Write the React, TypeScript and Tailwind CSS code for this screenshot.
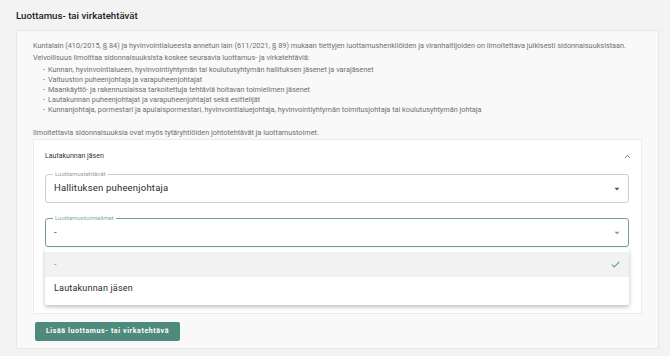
import React from 'react';

const bullets = [
  'Kunnan, hyvinvointialueen, hyvinvointiyhtymän tai koulutusyhtymän hallituksen jäsenet ja varajäsenet',
  'Valtuuston puheenjohtaja ja varapuheenjohtajat',
  'Maankäyttö- ja rakennuslaissa tarkoitettuja tehtäviä hoitavan toimielimen jäsenet',
  'Lautakunnan puheenjohtajat ja varapuheenjohtajat sekä esittelijät',
  'Kunnanjohtaja, pormestari ja apulaispormestari, hyvinvointialuejohtaja, hyvinvointiyhtymän toimitusjohtaja tai koulutusyhtymän johtaja',
];

const Caret: React.FC<{ color: string }> = ({ color }) => (
  <svg width="6" height="4" viewBox="0 0 6 4">
    <path d="M0.5 0.8 L5.5 0.8 L3 3.4 Z" fill={color} />
  </svg>
);

const App: React.FC = () => {
  return (
    <div className="w-[670px] h-[356px] bg-[#f3f3f3] overflow-hidden font-['Roboto',sans-serif]">
      <div className="h-[30px] flex items-center px-4 pt-[2px] text-[9.7px] font-medium text-[#222]">
        Luottamus- tai virkatehtävät
      </div>

      <div className="mx-4 w-[643px] h-[319px] bg-[#f9f9f9] border border-[#e7e7e7] px-[16px] pt-[9px]">
        <div className="text-[7.3px] leading-[11px] text-[#707070]">
          <p>
            Kuntalain (410/2015, § 84) ja hyvinvointialueesta annetun lain (611/2021, § 89) mukaan tiettyjen luottamushenkilöiden ja viranhaltijoiden on ilmoitettava julkisesti sidonnaisuuksistaan.
          </p>
          <p className="mt-[1px]">Velvollisuus ilmoittaa sidonnaisuuksista koskee seuraavia luottamus- ja virkatehtäviä:</p>
          <ul className="mt-[2px] pl-[10px]">
            {bullets.map((b) => (
              <li key={b} className="flex items-center h-[10px] leading-[10px]">
                <span className="w-[5px] text-[6px]">•</span>
                <span>{b}</span>
              </li>
            ))}
          </ul>
          <p className="mt-[12px]">Ilmoitettavia sidonnaisuuksia ovat myös tytäryhtiöiden johtotehtävät ja luottamustoimet.</p>
        </div>

        <div className="relative mt-[1px] w-[609px] h-[175px] bg-white border border-[#ececec] pl-[11px] pr-[12px]">
          <div className="h-[32px] flex items-center justify-between text-[7px] text-[#333]">
            <span>Lautakunnan jäsen</span>
            <svg width="7" height="5" viewBox="0 0 7 5" className="mr-[-2px]">
              <path d="M1 4 L3.5 1.3 L6 4" stroke="#777" strokeWidth="1" fill="none" />
            </svg>
          </div>

          <div className="relative mt-[2px] h-[29px] border border-[#cfcfcf] rounded-[3px] flex items-center justify-between pl-[8px] pr-[8px]">
            <span className="absolute top-[-5px] left-[7px] px-[2px] bg-white text-[6px] leading-[8px] text-[#9a9a9a]">
              Luottamustehtävät
            </span>
            <span className="text-[9.5px] tracking-[0.2px] text-[#2a2a2a]">Hallituksen puheenjohtaja</span>
            <Caret color="#555" />
          </div>

          <div className="relative mt-[15px] h-[29px] border-[1.5px] border-[#6e9f93] rounded-[3px] flex items-center justify-between pl-[8px] pr-[8px]">
            <span className="absolute top-[-5px] left-[7px] px-[2px] bg-white text-[6px] leading-[8px] text-[#7eab9f]">
              Luottamustoimielimet
            </span>
            <span className="text-[9.5px] text-[#444]">-</span>
            <Caret color="#7aa89c" />
          </div>

          <div className="absolute left-[11px] right-[12px] top-[108px] bg-white py-[4px] shadow-[0_2px_4px_rgba(0,0,0,0.25)] rounded-[2px] z-10">
            <div className="h-[25px] bg-[#f2f2f2] flex items-center justify-between pl-[9px] pr-[9px]">
              <span className="text-[9px] text-[#999]">-</span>
              <svg width="9" height="7" viewBox="0 0 9 7">
                <path d="M0.8 3.6 L3.2 6 L8.2 1" stroke="#6e9f93" strokeWidth="1.1" fill="none" />
              </svg>
            </div>
            <div className="h-[24px] flex items-center pl-[9px] text-[9px] tracking-[0.2px] text-[#2a2a2a]">
              Lautakunnan jäsen
            </div>
          </div>
        </div>

        <button className="mt-[8px] ml-[2px] w-[145px] h-[19px] bg-[#4f8b7d] rounded-[2px] text-white text-[7px] font-bold tracking-[0.6px] flex items-center justify-center">
          Lisää luottamus- tai virkatehtävä
        </button>
      </div>
    </div>
  );
};

export default App;
